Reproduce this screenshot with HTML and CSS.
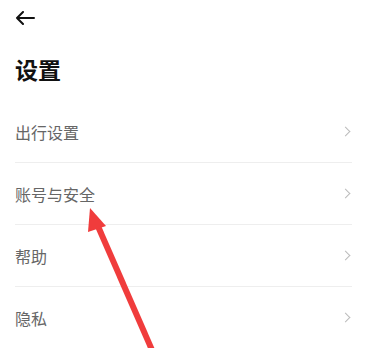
FILE: index.html
```html
<!DOCTYPE html>
<html lang="zh-CN">
<head>
  <meta charset="UTF-8" />
  <title>设置</title>
  <link rel="stylesheet" href="styles.css">
</head>
<body>

<div class="page">
  <div class="nav">
    <svg class="back" width="20" height="14" viewBox="0 0 20 14">
      <path d="M8 1 L2 7 L8 13 M2 7 H19" fill="none" stroke="#111" stroke-width="2" stroke-linecap="round" stroke-linejoin="round"/>
    </svg>
  </div>

  <h1 class="title">设置</h1>

  <div class="list">
    <div class="row"><span>出行设置</span><span class="chev"></span></div>
    <div class="row"><span>账号与安全</span><span class="chev"></span></div>
    <div class="row"><span>帮助</span><span class="chev"></span></div>
    <div class="row"><span>隐私</span><span class="chev"></span></div>
  </div>
</div>

<svg class="pointer" width="366" height="348" viewBox="0 0 366 348">
  <line x1="97" y1="224" x2="152" y2="350" stroke="#f03c3c" stroke-width="6"/>
  <polygon points="90,208 106,226 88,232" fill="#f03c3c"/>
</svg>

</body>
</html>
```

FILE: styles.css
```css
body {
  margin: 0;
  font-family: "Noto Sans CJK SC", "Noto Sans", sans-serif;
  background: #fff;
  overflow: hidden;
}
.page {
  padding: 0 14px 0 15px;
}
.nav {
  height: 36px;
  display: flex;
  align-items: center;
}
.back {
  display: block;
}
.title {
  margin: 14px 0 0;
  font-size: 23px;
  line-height: 38px;
  font-weight: bold;
  color: #111;
}
.list {
  margin-top: 13px;
}
.row {
  height: 61px;
  border-bottom: 1px solid #eeeeee;
  display: flex;
  align-items: center;
  justify-content: space-between;
  font-size: 16px;
  color: #666;
}
.row:last-child {
  border-bottom: none;
}
.chev {
  width: 6px;
  height: 6px;
  border-top: 1.5px solid #bbb;
  border-right: 1.5px solid #bbb;
  transform: rotate(45deg);
  margin-right: 3px;
}
.pointer {
  position: absolute;
  left: 0;
  top: 0;
}
```
